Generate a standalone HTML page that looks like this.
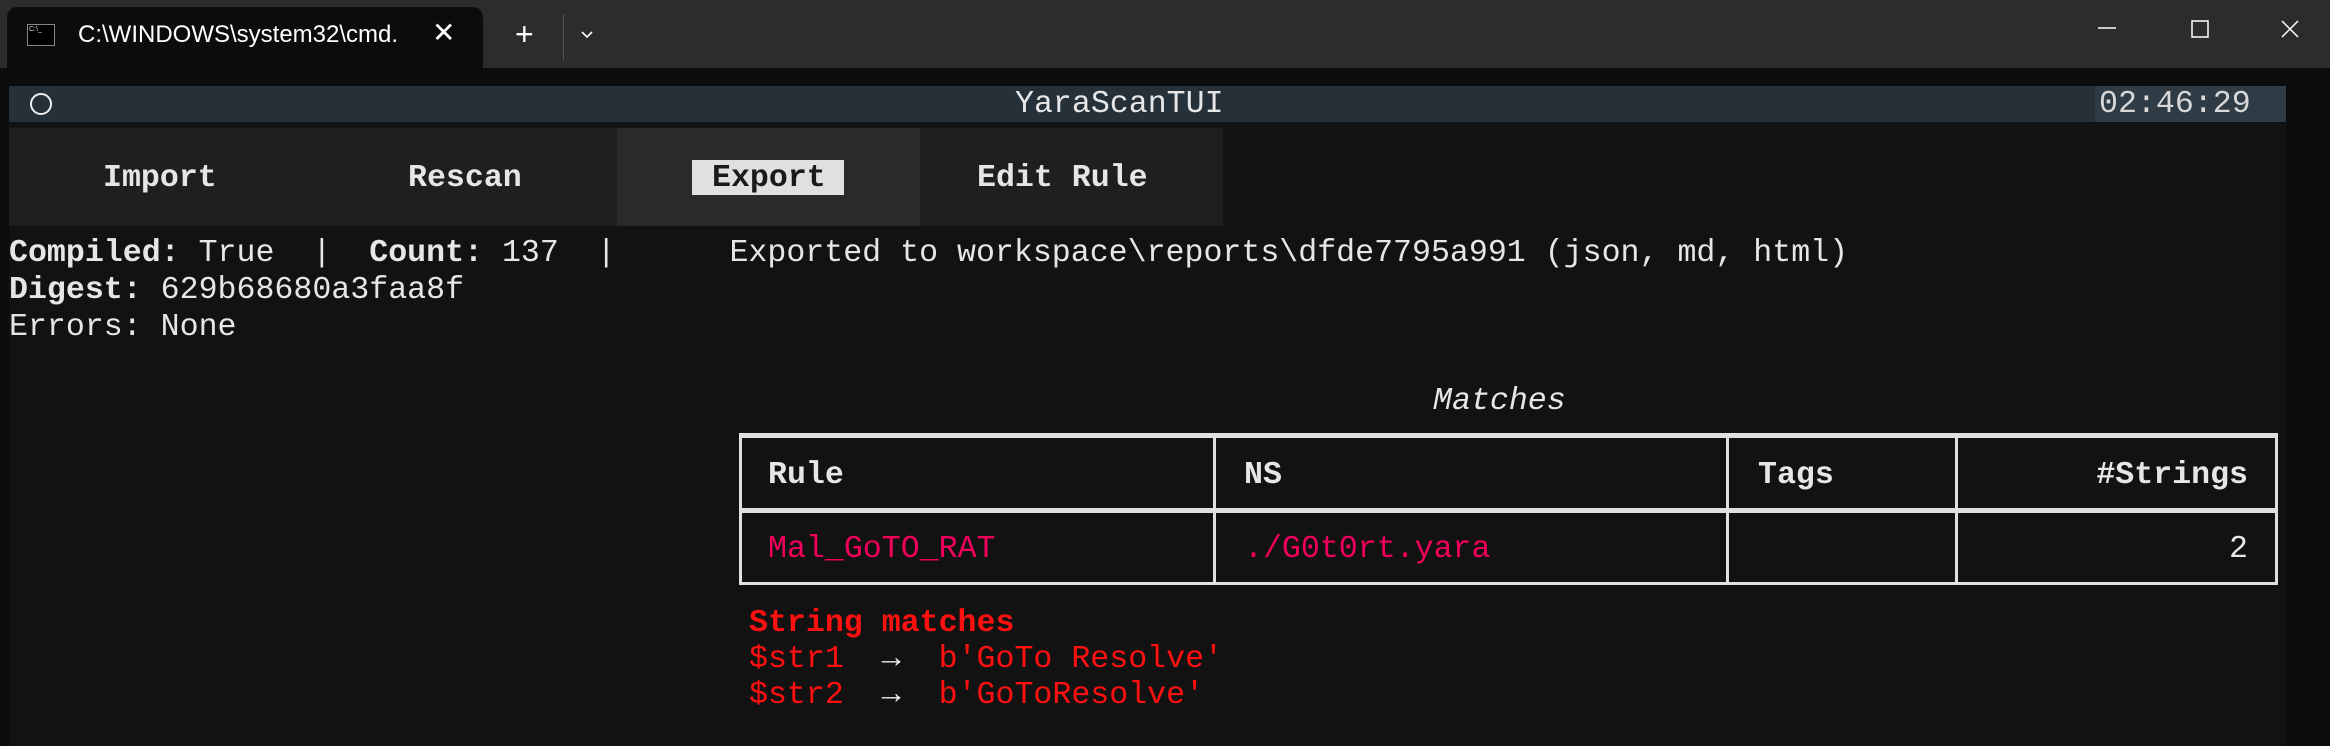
<!DOCTYPE html>
<html><head><meta charset="utf-8"><style>
*{margin:0;padding:0;box-sizing:border-box}
body{width:2330px;height:746px;background:#0c0c0c;position:relative;overflow:hidden;font-family:"Liberation Mono",monospace;font-size:31.6px;color:#e6e6e6}
.a{position:absolute;white-space:pre;line-height:37px;height:37px}
.b{font-weight:bold}
</style></head><body>
<div style="position:absolute;left:0;top:0;width:2330px;height:68px;background:#2c2c2c"></div>
<div style="position:absolute;left:7px;top:7px;width:476px;height:63px;background:#0c0c0c;border-radius:10px 10px 0 0"></div>
<div style="position:absolute;left:27px;top:24px;width:28px;height:22px;background:#000;border:1px solid #888"></div>
<div style="position:absolute;left:29px;top:26px;font:7px 'Liberation Sans';color:#ddd">C:\_</div>
<div class="a" style="left:78px;top:20px;font:24px 'Liberation Sans',sans-serif;color:#fff;line-height:30px">C:\WINDOWS\system32\cmd.</div>
<div class="a" style="left:432px;top:18px;font:28px 'Liberation Sans',sans-serif;color:#fff;line-height:30px">✕</div>
<div class="a" style="left:515px;top:16px;font:32px 'Liberation Sans',sans-serif;color:#fff;line-height:36px">+</div>
<div style="position:absolute;left:563px;top:14px;width:1px;height:46px;background:#555"></div>
<svg style="position:absolute;left:580px;top:30px" width="14" height="10"><path d="M2 2 L7 7 L12 2" stroke="#fff" stroke-width="1.6" fill="none"/></svg>
<svg style="position:absolute;left:2096px;top:20px" width="220" height="20"><path d="M2 8 H20" stroke="#fff" stroke-width="1.5"/><rect x="96" y="1" width="16" height="16" stroke="#fff" stroke-width="1.5" fill="none"/><path d="M186 1 L202 17 M202 1 L186 17" stroke="#fff" stroke-width="1.5"/></svg>

<div style="position:absolute;left:9px;top:86px;width:2277px;height:660px;background:#121212"></div>
<div style="position:absolute;left:9px;top:86px;width:2277px;height:36px;background:#253039"></div>
<div style="position:absolute;left:2095px;top:86px;width:191px;height:36px;background:#2f3b45"></div>
<div style="position:absolute;left:30px;top:93px;width:22px;height:22px;border:2px solid #eee;border-radius:50%"></div>
<div class="a" style="left:1015px;top:86px;color:#e6e6e6">YaraScanTUI</div>
<div class="a" style="left:2099px;top:86px;color:#d8d8d8">02:46:29</div>

<div style="position:absolute;left:9px;top:128px;width:1214px;height:98px;background:#1f1f1f"></div>
<div style="position:absolute;left:617px;top:128px;width:303px;height:98px;background:#2a2a2a"></div>
<div style="position:absolute;left:692px;top:160px;width:152px;height:35px;background:#e0e0e0"></div>
<div class="a b" style="left:103px;top:160px">Import</div>
<div class="a b" style="left:408px;top:160px">Rescan</div>
<div class="a b" style="left:712px;top:160px;color:#1a1a1a">Export</div>
<div class="a b" style="left:977px;top:160px">Edit Rule</div>

<div class="a" style="left:9px;top:235px"><b>Compiled:</b> True  |  <b>Count:</b> 137  |      Exported to workspace\reports\dfde7795a991 (json, md, html)</div>
<div class="a" style="left:9px;top:272px"><b>Digest:</b> 629b68680a3faa8f</div>
<div class="a" style="left:9px;top:309px">Errors: None</div>

<div class="a" style="left:1433px;top:383px;font-style:italic">Matches</div>
<div style="position:absolute;left:739px;top:433px;width:1539px;height:152px;border:3px solid #e0e0e0;border-top-width:5px"></div>
<div style="position:absolute;left:739px;top:508px;width:1539px;height:5px;background:#e0e0e0"></div>
<div style="position:absolute;left:1213px;top:433px;width:3px;height:152px;background:#e0e0e0"></div>
<div style="position:absolute;left:1726px;top:433px;width:3px;height:152px;background:#e0e0e0"></div>
<div style="position:absolute;left:1955px;top:433px;width:3px;height:152px;background:#e0e0e0"></div>
<div class="a b" style="left:768px;top:457px">Rule</div>
<div class="a b" style="left:1244px;top:457px">NS</div>
<div class="a b" style="left:1758px;top:457px">Tags</div>
<div class="a b" style="left:2000px;top:457px;width:248px;text-align:right">#Strings</div>
<div class="a" style="left:768px;top:531px;color:#f0005a">Mal_GoTO_RAT</div>
<div class="a" style="left:1244px;top:531px;color:#f0005a">./G0t0rt.yara</div>
<div class="a" style="left:2200px;top:531px;width:48px;text-align:right">2</div>

<div class="a b" style="left:749px;top:605px;color:#ff1010">String matches</div>
<div class="a" style="left:749px;top:641px;color:#ff1010">$str1  <span style="color:#eee">→</span>  b'GoTo Resolve'</div>
<div class="a" style="left:749px;top:677px;color:#ff1010">$str2  <span style="color:#eee">→</span>  b'GoToResolve'</div>
</body></html>
